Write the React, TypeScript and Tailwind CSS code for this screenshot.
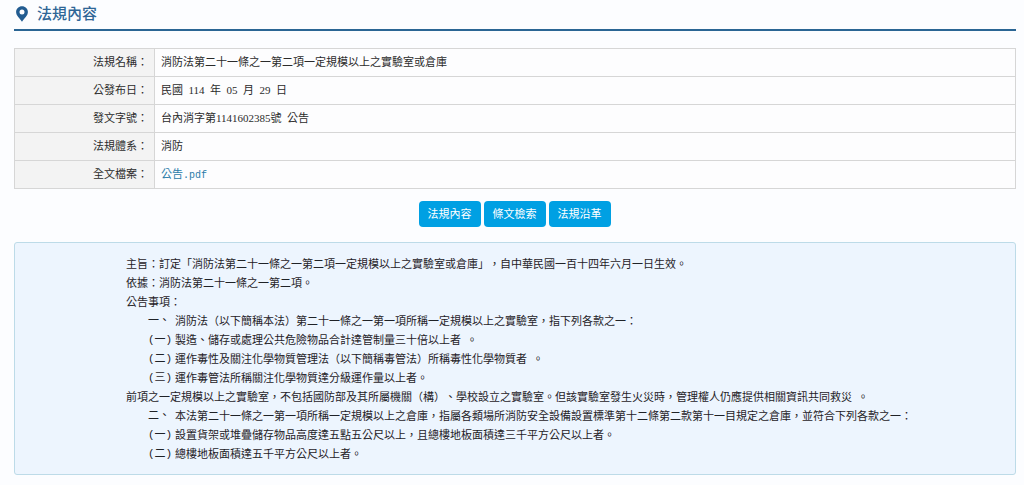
const cjk = "font-['Liberation_Serif','Noto_Sans_CJK_TC',sans-serif]";

const tabs = ["法規內容", "條文檢索", "法規沿革"];

const rows = [
    { label: "法規名稱：", value: "消防法第二十一條之一第二項一定規模以上之實驗室或倉庫" },
    { label: "公發布日：", value: "民國  114  年  05  月  29  日" },
    { label: "發文字號：", value: "台內消字第1141602385號  公告" },
    { label: "法規體系：", value: "消防" },
    { label: "全文檔案：", file: "公告", ext: ".pdf" },
];

const lines = [
    { text: "主旨：訂定「消防法第二十一條之一第二項一定規模以上之實驗室或倉庫」，自中華民國一百十四年六月一日生效。" },
    { text: "依據：消防法第二十一條之一第二項。" },
    { text: "公告事項：" },
    { mark: "一、", text: "消防法（以下簡稱本法）第二十一條之一第一項所稱一定規模以上之實驗室，指下列各款之一：" },
    { mark: "(一)", text: "製造、儲存或處理公共危險物品合計達管制量三十倍以上者  。" },
    { mark: "(二)", text: "運作毒性及關注化學物質管理法（以下簡稱毒管法）所稱毒性化學物質者  。" },
    { mark: "(三)", text: "運作毒管法所稱關注化學物質達分級運作量以上者。" },
    { text: "前項之一定規模以上之實驗室，不包括國防部及其所屬機關（構）、學校設立之實驗室。但該實驗室發生火災時，管理權人仍應提供相關資訊共同救災  。" },
    { mark: "二、", text: "本法第二十一條之一第一項所稱一定規模以上之倉庫，指屬各類場所消防安全設備設置標準第十二條第二款第十一目規定之倉庫，並符合下列各款之一：" },
    { mark: "(一)", text: "設置貨架或堆疊儲存物品高度達五點五公尺以上，且總樓地板面積達三千平方公尺以上者。" },
    { mark: "(二)", text: "總樓地板面積達五千平方公尺以上者。" },
];

const PinIcon = () => (
    <svg viewBox="0 0 12 16" className="h-4 w-3" fill="#225c91" aria-hidden="true">
        <path
            fillRule="evenodd"
            d="M6 0.300C2.700 0.300 0.100 2.800 0.100 6c0 3.800 3.600 6.200 5.900 9.700C8.300 12.200 11.900 9.800 11.900 6 11.900 2.800 9.300 0.300 6 0.300Zm0 3.200a2.500 2.500 0 1 1 0 5 2.500 2.500 0 0 1 0-5Z"
        />
    </svg>
);

const Heading = () => (
    <header className="flex h-[31px] items-center gap-[9px] border-b-2 border-[#2a6594] pb-[2px] pl-[2px]">
        <PinIcon />
        <h1 className="text-[15px] leading-5 font-medium text-[#2f6696]">法規內容</h1>
    </header>
);

const InfoTable = () => (
    <table className="mt-[17px] w-full table-fixed border-collapse text-[11px] leading-[19px] text-[#2b2b2b]">
        <tbody>
            {rows.map((row) => (
                <tr key={row.label} className="h-7">
                    <th scope="row" className="w-[140px] border border-[#d6d6d6] bg-[#f3f3f3] pr-[6px] text-right font-normal">
                        {row.label}
                    </th>
                    <td className="border border-[#d6d6d6] bg-[#fdfdfe] pl-[6px] whitespace-pre-wrap">
                        {row.file ? (
                            <a href="#file" className="text-[#2a7ba8] hover:underline">
                                {row.file}
                                <span className="font-['Liberation_Mono',monospace] text-[10px] leading-none">{row.ext}</span>
                            </a>
                        ) : (
                            row.value
                        )}
                    </td>
                </tr>
            ))}
        </tbody>
    </table>
);

const App = () => {
    return (
        <div lang="zh-Hant" className={`min-h-screen bg-[#fcfdff] pr-2 pb-2 pl-[14px] [text-spacing-trim:space-all] ${cjk}`}>
            <Heading />
            <InfoTable />
            <nav className="mt-3 flex justify-center gap-[3px] pr-px">
                {tabs.map((tab) => (
                    <button key={tab} type="button" className="h-[26px] w-[62px] cursor-pointer rounded bg-[#00a0e3] text-[11px] leading-4 text-white">
                        {tab}
                    </button>
                ))}
            </nav>
            <article className="mt-[15px] rounded-[3px] border border-[#bddbe8] bg-[#edf5fe] pt-3 pr-[90px] pb-[10px] pl-[111px] text-[11px] leading-[19px] text-[#1f2227]">
                {lines.map((line, i) =>
                    line.mark ? (
                        <div key={i} className="flex pl-[22px]">
                            <span className="w-[27px] shrink-0 font-['Liberation_Mono','Noto_Sans_CJK_TC',monospace] whitespace-nowrap">{line.mark}</span>
                            <p className="whitespace-pre-wrap">{line.text}</p>
                        </div>
                    ) : (
                        <p key={i} className="whitespace-pre-wrap">{line.text}</p>
                    )
                )}
            </article>
        </div>
    );
};

export default App;
